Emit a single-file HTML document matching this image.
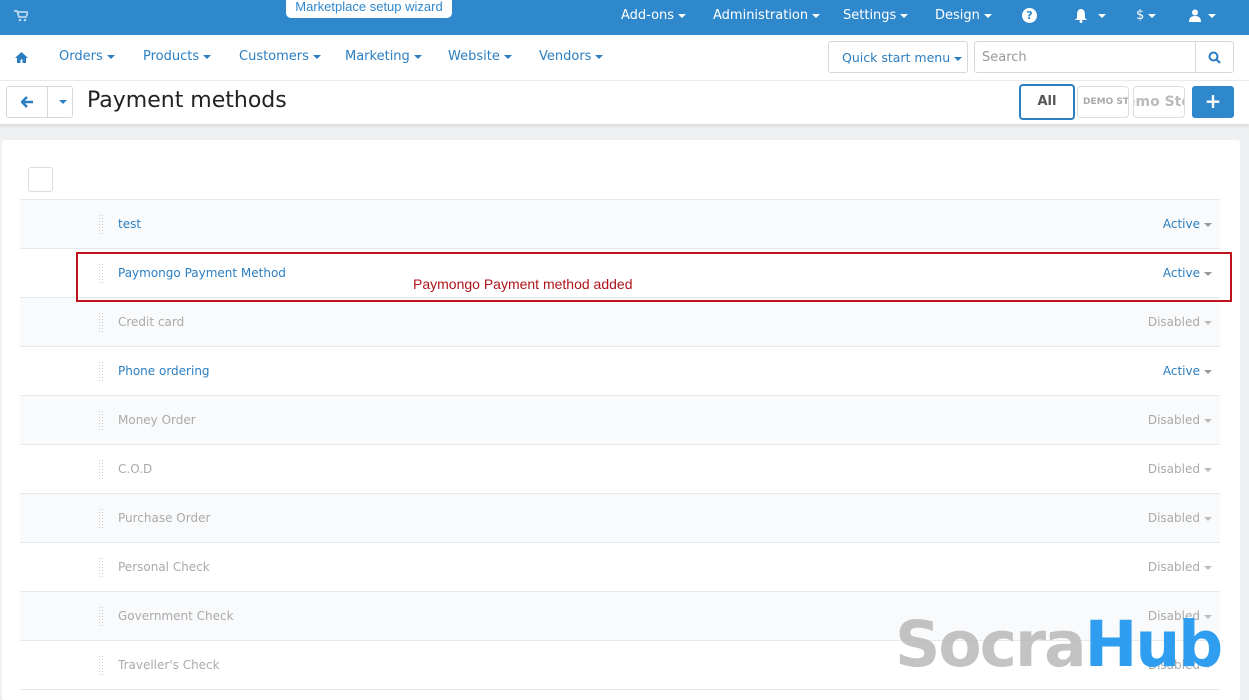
<!DOCTYPE html>
<html><head><meta charset="utf-8"><style>
*{box-sizing:border-box;margin:0;padding:0}
body{width:1249px;height:684px;overflow:hidden;background:#eef0f1;font-family:"DejaVu Sans","Liberation Sans",sans-serif;position:relative}
.top{position:absolute;left:0;top:0;width:1249px;height:35px;background:#3088cc;color:#fff;font-size:13px}
.top span{position:absolute;top:8px}
.car{border-top:4px solid #fff;border-left:4px solid transparent;border-right:4px solid transparent;display:inline-block;width:0;height:0;vertical-align:middle;margin-left:4px}
.wiz{position:absolute;left:286px;top:-4px;width:166px;height:22px;background:#fff;border-radius:0 0 5px 5px;color:#3088cc;font-family:"Liberation Sans",sans-serif;font-size:13px;text-align:center;line-height:22px}
.nav{position:absolute;left:0;top:35px;width:1249px;height:46px;background:#fff;border-bottom:1px solid #e8eaec;font-size:13px;color:#2b7ec1}
.nav span{position:absolute;top:14px}
.nav .car{border-top-color:#2b7ec1}
.qs{position:absolute;left:828px;top:6px;width:140px;height:32px;border:1px solid #d5d8db;border-radius:3px}
.sr{position:absolute;left:974px;top:6px;width:260px;height:32px;border:1px solid #d5d8db;border-radius:3px;color:#999}
.hdr{position:absolute;left:0;top:81px;width:1249px;height:43px;background:#fff;box-shadow:0 2px 3px rgba(0,0,0,.1)}
.card{position:absolute;left:2px;top:140px;width:1238px;height:560px;background:#fff;border-radius:3px}
.row{position:absolute;left:20px;width:1200px;height:49px;border-bottom:1px solid #e6e9ec;font-size:12px}
.row.s{background:#f8fafc}
.row .d{position:absolute;left:78px;top:14px;width:6px;height:20px;background-image:radial-gradient(#ccc 0.6px,transparent 0.8px);background-size:3px 3px}
.row .n{position:absolute;left:98px;top:17px}
.row .st{position:absolute;right:8px;top:17px}
.a{color:#2b7ec1}.g{color:#aaa}
.a .car{border-top-color:#999}.g .car{border-top-color:#bbb}
</style></head><body>
<div class="top">
<svg style="position:absolute;left:14px;top:10px" width="14" height="12" viewBox="0 0 14 12"><path d="M0 1h3l2 6h7l2-5H4" fill="none" stroke="#b8d6ee" stroke-width="1.8"/><circle cx="6" cy="10" r="1.3" fill="#b8d6ee"/><circle cx="11" cy="10" r="1.3" fill="#b8d6ee"/></svg>
<div class="wiz">Marketplace setup wizard</div>
<span style="left:621px">Add-ons<i class="car"></i></span>
<span style="left:713px">Administration<i class="car"></i></span>
<span style="left:843px">Settings<i class="car"></i></span>
<span style="left:935px">Design<i class="car"></i></span>
<span style="left:1022px;width:15px;height:15px;border-radius:50%;background:#fff;color:#3088cc;font-size:11px;text-align:center;line-height:15px;font-weight:bold">?</span>
<svg style="position:absolute;left:1074px;top:8px" width="14" height="15" viewBox="0 0 14 15"><path d="M7 1C4 1 3 4 3 7v3L1 12h12l-2-2V7c0-3-1-6-4-6z" fill="#fff"/><circle cx="7" cy="13.5" r="1.5" fill="#fff"/></svg>
<i class="car" style="position:absolute;left:1094px;top:14px"></i>
<span style="left:1136px">$<i class="car"></i></span>
<svg style="position:absolute;left:1189px;top:9px" width="12" height="13" viewBox="0 0 12 13"><circle cx="6" cy="3.5" r="3" fill="#fff"/><path d="M0 13c0-4 2-6 6-6s6 2 6 6z" fill="#fff"/></svg>
<i class="car" style="position:absolute;left:1204px;top:14px"></i>
</div>
<div class="nav">
<svg style="position:absolute;left:15px;top:17px" width="13" height="11" viewBox="0 0 13 11"><path d="M6.5 0L0 6h2v5h3.5V7.5h2V11H11V6h2z" fill="#2b7ec1"/></svg>
<span style="left:59px">Orders<i class="car"></i></span>
<span style="left:143px">Products<i class="car"></i></span>
<span style="left:239px">Customers<i class="car"></i></span>
<span style="left:345px">Marketing<i class="car"></i></span>
<span style="left:448px">Website<i class="car"></i></span>
<span style="left:539px">Vendors<i class="car"></i></span>
<div class="qs"><span style="left:13px;top:8px;font-size:12.5px">Quick start menu<i class="car"></i></span></div>
<div class="sr"><span style="left:7px;top:8px;color:#999">Search</span><div style="position:absolute;left:220px;top:0;width:1px;height:30px;background:#d5d8db"></div>
<svg style="position:absolute;left:233px;top:9px" width="13" height="13" viewBox="0 0 13 13"><circle cx="5.5" cy="5.5" r="4" fill="none" stroke="#2b7ec1" stroke-width="2"/><path d="M8.5 8.5l3.5 3.5" stroke="#2b7ec1" stroke-width="2.2"/></svg></div>
</div>
<div class="hdr">
<div style="position:absolute;left:6px;top:5px;width:67px;height:32px;border:1px solid #d5d8db;border-radius:3px"><div style="position:absolute;left:40px;top:0;width:1px;height:30px;background:#d5d8db"></div>
<svg style="position:absolute;left:14px;top:9px" width="13" height="12" viewBox="0 0 13 12"><path d="M1 6h11M6 1L1 6l5 5" fill="none" stroke="#2b7ec1" stroke-width="2.4"/></svg>
<i class="car" style="position:absolute;left:48px;top:13px;border-top-color:#2b7ec1"></i></div>
<div style="position:absolute;left:87px;top:7px;font-size:22px;color:#222">Payment methods</div>
<div style="position:absolute;left:1019px;top:3px;width:56px;height:36px;border:2px solid #2b7ec1;border-radius:4px;text-align:center;line-height:32px;font-size:13px;font-weight:bold;color:#555">All</div>
<div style="position:absolute;left:1077px;top:5px;width:52px;height:32px;border:1px solid #ddd;border-radius:4px;overflow:hidden;font-size:9px;color:#aaa;line-height:30px;padding-left:5px;white-space:nowrap;font-weight:bold">DEMO STO</div>
<div style="position:absolute;left:1133px;top:5px;width:52px;height:32px;border:1px solid #ddd;border-radius:4px;overflow:hidden;font-size:14px;color:#bbb;line-height:30px;white-space:nowrap;font-weight:bold;text-indent:-8px">emo Sto</div>
<div style="position:absolute;left:1192px;top:5px;width:42px;height:32px;background:#3088cc;border-radius:3px;color:#fff;font-size:20px;font-weight:bold;text-align:center;line-height:30px">+</div>
</div>
<div class="card">
<div style="position:absolute;left:26px;top:27px;width:25px;height:25px;border:1px solid #ddd;border-radius:3px"></div>
</div>
<div style="position:absolute;left:20px;top:199px;width:1200px;height:1px;background:#e6e9ec"></div>
<div class="row s" style="top:200px"><i class="d"></i><span class="n a">test</span><span class="st a">Active<i class="car"></i></span></div>
<div class="row" style="top:249px"><i class="d"></i><span class="n a">Paymongo Payment Method</span><span class="st a">Active<i class="car"></i></span></div>
<div class="row s" style="top:298px"><i class="d"></i><span class="n g">Credit card</span><span class="st g">Disabled<i class="car"></i></span></div>
<div class="row" style="top:347px"><i class="d"></i><span class="n a">Phone ordering</span><span class="st a">Active<i class="car"></i></span></div>
<div class="row s" style="top:396px"><i class="d"></i><span class="n g">Money Order</span><span class="st g">Disabled<i class="car"></i></span></div>
<div class="row" style="top:445px"><i class="d"></i><span class="n g">C.O.D</span><span class="st g">Disabled<i class="car"></i></span></div>
<div class="row s" style="top:494px"><i class="d"></i><span class="n g">Purchase Order</span><span class="st g">Disabled<i class="car"></i></span></div>
<div class="row" style="top:543px"><i class="d"></i><span class="n g">Personal Check</span><span class="st g">Disabled<i class="car"></i></span></div>
<div class="row s" style="top:592px"><i class="d"></i><span class="n g">Government Check</span><span class="st g">Disabled<i class="car"></i></span></div>
<div class="row" style="top:641px"><i class="d"></i><span class="n g">Traveller's Check</span><span class="st g">Disabled<i class="car"></i></span></div>
<div style="position:absolute;left:76px;top:252px;width:1156px;height:50px;border:2px solid #c0141c"></div>
<div style="position:absolute;left:413px;top:276px;color:#b0141c;font-family:'Liberation Sans',sans-serif;font-size:14px">Paymongo Payment method added</div>
<div style="position:absolute;left:895px;top:605px;font-family:'DejaVu Sans',sans-serif;font-weight:bold;font-size:63px;letter-spacing:-2px;line-height:80px;white-space:nowrap"><span style="color:rgba(180,180,180,.8)">Socra</span><span style="color:#2f9ef0">Hub</span></div>
</body></html>
